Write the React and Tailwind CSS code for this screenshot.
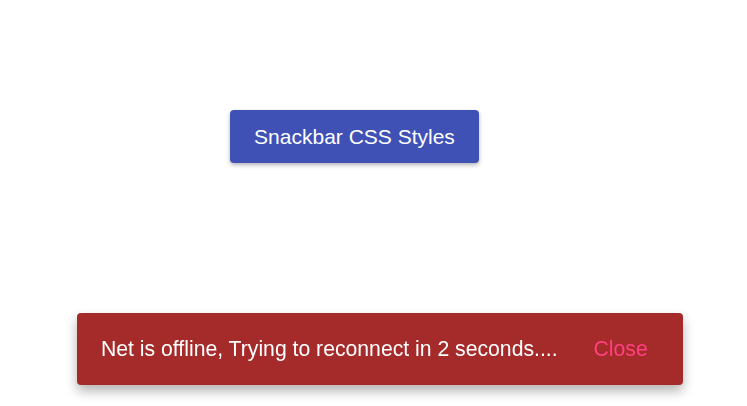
export default function App() {
  return (
    <div className="min-h-screen bg-white font-['Liberation_Sans',Arial,sans-serif]">
      <div className="pt-[110px] pl-[230px]">
        <button className="w-[249px] h-[53px] rounded-[4px] bg-[#3f51b5] text-white text-[21px] shadow-[0_2px_4px_rgba(0,0,0,0.3)]">
          Snackbar CSS Styles
        </button>
      </div>

      <div className="fixed left-[77px] top-[313px] w-[606px] h-[72px] rounded-[4px] bg-[#a52a2a] flex items-center pl-[24px] shadow-[0_6px_12px_rgba(0,0,0,0.3)]">
        <span className="text-white text-[21.2px]">Net is offline, Trying to reconnect in 2 seconds....</span>
        <span className="ml-[36px] text-[#ff4081] text-[21.2px]">Close</span>
      </div>
    </div>
  );
}
